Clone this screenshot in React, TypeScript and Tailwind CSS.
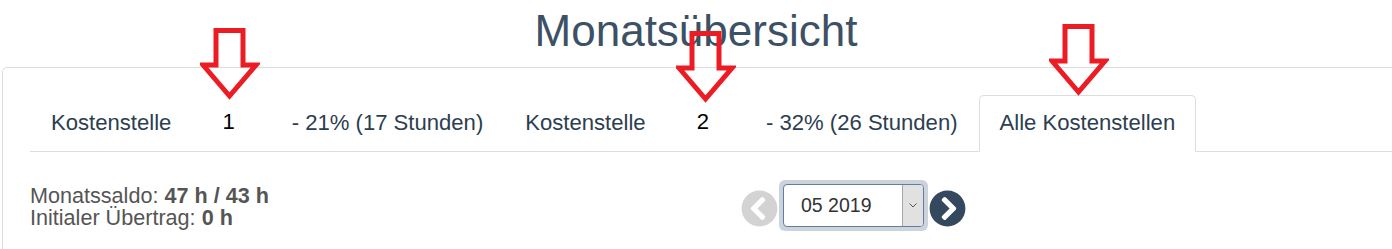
import React from "react";
import { FaChevronCircleLeft, FaChevronCircleRight } from "react-icons/fa";

function Arrow({ className }: { className: string }) {
  return (
    <svg
      className={`absolute ${className}`}
      width="60"
      height="72"
      viewBox="0 0 60 72"
      fill="none"
    >
      <polygon
        points="16,2.5 43,2.5 43,37 56,37 29.5,68 3,37 16,37"
        fill="white"
        fillOpacity="0"
        stroke="#ec1c24"
        strokeWidth="5"
        strokeLinejoin="miter"
      />
    </svg>
  );
}

function CostTab({ num, rest }: { num: string; rest: string }) {
  return (
    <li className="-mb-px">
      <a className="flex items-center border border-transparent px-[20px] pt-[11px] pb-[13px] leading-[31px] text-[#2c3e50]">
        <span>Kostenstelle</span>
        <span className="ml-[51px] mr-[57px] text-black relative -top-[1px]">{num}</span>
        <span>{rest}</span>
      </a>
    </li>
  );
}

export default function App() {
  return (
    <div
      className="relative w-[1392px] h-[249px] overflow-hidden bg-white"
      style={{ fontFamily: '"Liberation Sans", Arial, sans-serif' }}
    >
      <h1 className="mt-[7px] text-center text-[44px] leading-[48px] text-[#3d5166] font-normal">
        Monatsübersicht
      </h1>
      <div className="mt-[12px] ml-[2px] w-[1420px] border border-[#dddddd] rounded-tl-[5px] pl-[27px] pt-[27px] h-[300px]">
        <ul className="flex border-b border-[#dddddd] text-[22.1px]">
          <CostTab num="1" rest="- 21% (17 Stunden)" />
          <CostTab num="2" rest="- 32% (26 Stunden)" />
          <li className="-mb-px">
            <a className="block bg-white border border-[#dddddd] border-b-white rounded-t-[5px] px-[20px] pt-[11px] pb-[13px] leading-[31px] text-[#2c3e50]">
              Alle Kostenstellen
            </a>
          </li>
        </ul>
        <div className="mt-[28px] flex items-start">
          <div className="w-[711px] mt-[5px] text-[21.6px] leading-[22px] text-[#555555]">
            <div>
              Monatssaldo: <b>47 h / 43 h</b>
            </div>
            <div>
              Initialer Übertrag: <b>0 h</b>
            </div>
          </div>
          <div className="flex items-center gap-[1px]">
            <FaChevronCircleLeft className="w-[37px] h-[37px] text-[#d3d3d3] mt-[6px]" />
            <div className="rounded-[6px] bg-[#ccd3db] p-[4px]">
              <div className="flex w-[141px] h-[43px] rounded-[4px] border border-[#5e7fa3] bg-white overflow-hidden">
                <div className="flex-1 pl-[17px] flex items-center text-[19.5px] text-[#333333]">
                  05 2019
                </div>
                <div className="w-[21px] bg-[#e1e1e1] border-l border-[#a6a6a6] flex items-center justify-center">
                  <svg width="8" height="5" viewBox="0 0 8 5">
                    <polyline points="0.5,0.5 4,4 7.5,0.5" fill="none" stroke="#555" strokeWidth="1" />
                  </svg>
                </div>
              </div>
            </div>
            <FaChevronCircleRight className="w-[37px] h-[37px] text-[#34495e] mt-[6px]" />
          </div>
        </div>
      </div>
      <Arrow className="left-[200px] top-[28px]" />
      <Arrow className="left-[676px] top-[31px]" />
      <Arrow className="left-[1049px] top-[24px]" />
    </div>
  );
}
